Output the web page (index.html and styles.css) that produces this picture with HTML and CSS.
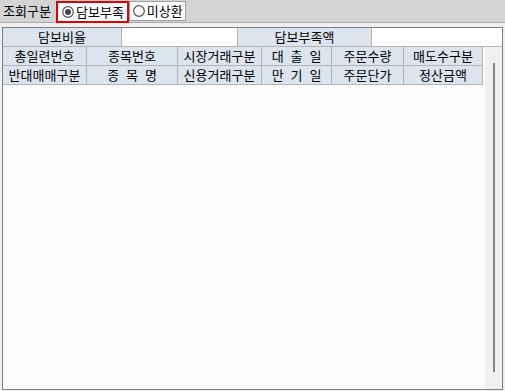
FILE: index.html
```html
<!DOCTYPE html>
<html>
  <head>
    <meta charset="UTF-8" />
    <meta name="viewport" content="width=device-width, initial-scale=1.0" />
    <title>담보부족 조회</title>
    <link rel="stylesheet" href="styles.css">
  </head>
  <body>
    <div class="toolbar">
      <span class="toolbar-label">조회구분</span>
      <label class="radio radio-checked">
        <svg class="radio-mark" width="12" height="12" viewBox="0 0 12 12">
          <circle cx="6" cy="6" r="5.3" fill="#fff" stroke="#555" stroke-width="1.2" />
          <circle cx="6" cy="6" r="3" fill="#444" />
        </svg>
        담보부족
      </label>
      <label class="radio">
        <svg class="radio-mark" width="12" height="12" viewBox="0 0 12 12">
          <circle cx="6" cy="6" r="5.3" fill="#fff" stroke="#555" stroke-width="1.2" />
        </svg>
        미상환
      </label>
    </div>

    <div class="frame">
      <div class="summary">
        <div class="cell cell-head">담보비율</div>
        <div class="cell cell-value"></div>
        <div class="cell cell-head">담보부족액</div>
        <div class="cell cell-value cell-last"></div>
      </div>
      <div class="grid-wrap">
        <div class="grid-main">
          <div class="grid-head">
            <div class="cell cell-head">총일련번호</div>
            <div class="cell cell-head">종목번호</div>
            <div class="cell cell-head">시장거래구분</div>
            <div class="cell cell-head">대 출 일</div>
            <div class="cell cell-head">주문수량</div>
            <div class="cell cell-head">매도수구분</div>
            <div class="cell cell-head">반대매매구분</div>
            <div class="cell cell-head">종 목 명</div>
            <div class="cell cell-head">신용거래구분</div>
            <div class="cell cell-head">만 기 일</div>
            <div class="cell cell-head">주문단가</div>
            <div class="cell cell-head">정산금액</div>
          </div>
        </div>
        <div class="vscroll">
          <div class="vscroll-thumb"></div>
        </div>
      </div>
    </div>
  </body>
</html>
```

FILE: styles.css
```css
body {
  margin: 0;
  height: 391px;
  background-color: #f0f0f0;
  font-family: "Noto Sans CJK KR", "Noto Sans", sans-serif;
  font-size: 13px;
  color: #000;
  overflow: hidden;
}

.toolbar {
  display: flex;
  align-items: flex-start;
  height: 22px;
  background-color: #d4d4d4;
  border-bottom: 1px solid #a9a9a9;
}

.toolbar-label {
  line-height: 22px;
  margin: 0 4px 0 3px;
  width: 49px;
}

.radio {
  display: flex;
  align-items: center;
  gap: 2px;
  height: 20px;
  margin-top: 1px;
  padding: 0 2px 0 3px;
  background-color: #fff;
  border: 1px solid #a0a0a0;
  box-sizing: border-box;
  line-height: 20px;
}

.radio-checked {
  height: 22px;
  border: 2px solid #e60000;
  padding: 0 3px 0 4px;
}

.radio-mark {
  flex: none;
}

.frame {
  display: flex;
  flex-direction: column;
  margin: 4px 0 0 2px;
  width: 501px;
  height: 363px;
  border: 1px solid #7f7f7f;
  box-sizing: border-box;
  background-color: #fcfdfe;
}

.summary {
  display: grid;
  grid-template-columns: 119px 116px 134px 130px;
}

.cell {
  height: 19px;
  line-height: 18px;
  text-align: center;
  word-spacing: 4px;
  border-right: 1px solid #b4b4b4;
  border-bottom: 1px solid #b4b4b4;
  box-sizing: border-box;
  white-space: pre;
  overflow: hidden;
}

.cell-head {
  background-color: #dce4ed;
}

.cell-value {
  background-color: #fff;
}

.cell-last {
  border-right: none;
}

.grid-wrap {
  display: flex;
  flex: 1;
}

.grid-main {
  flex: 1;
}

.grid-head {
  display: grid;
  grid-template-columns: 84px 91px 84px 70px 72px 79px;
}

.vscroll {
  display: flex;
  justify-content: center;
  width: 17px;
  padding: 16px 0 17px;
  box-sizing: border-box;
  background-color: #f0f0f0;
}

.vscroll-thumb {
  width: 2px;
  background-color: #868686;
}
```
